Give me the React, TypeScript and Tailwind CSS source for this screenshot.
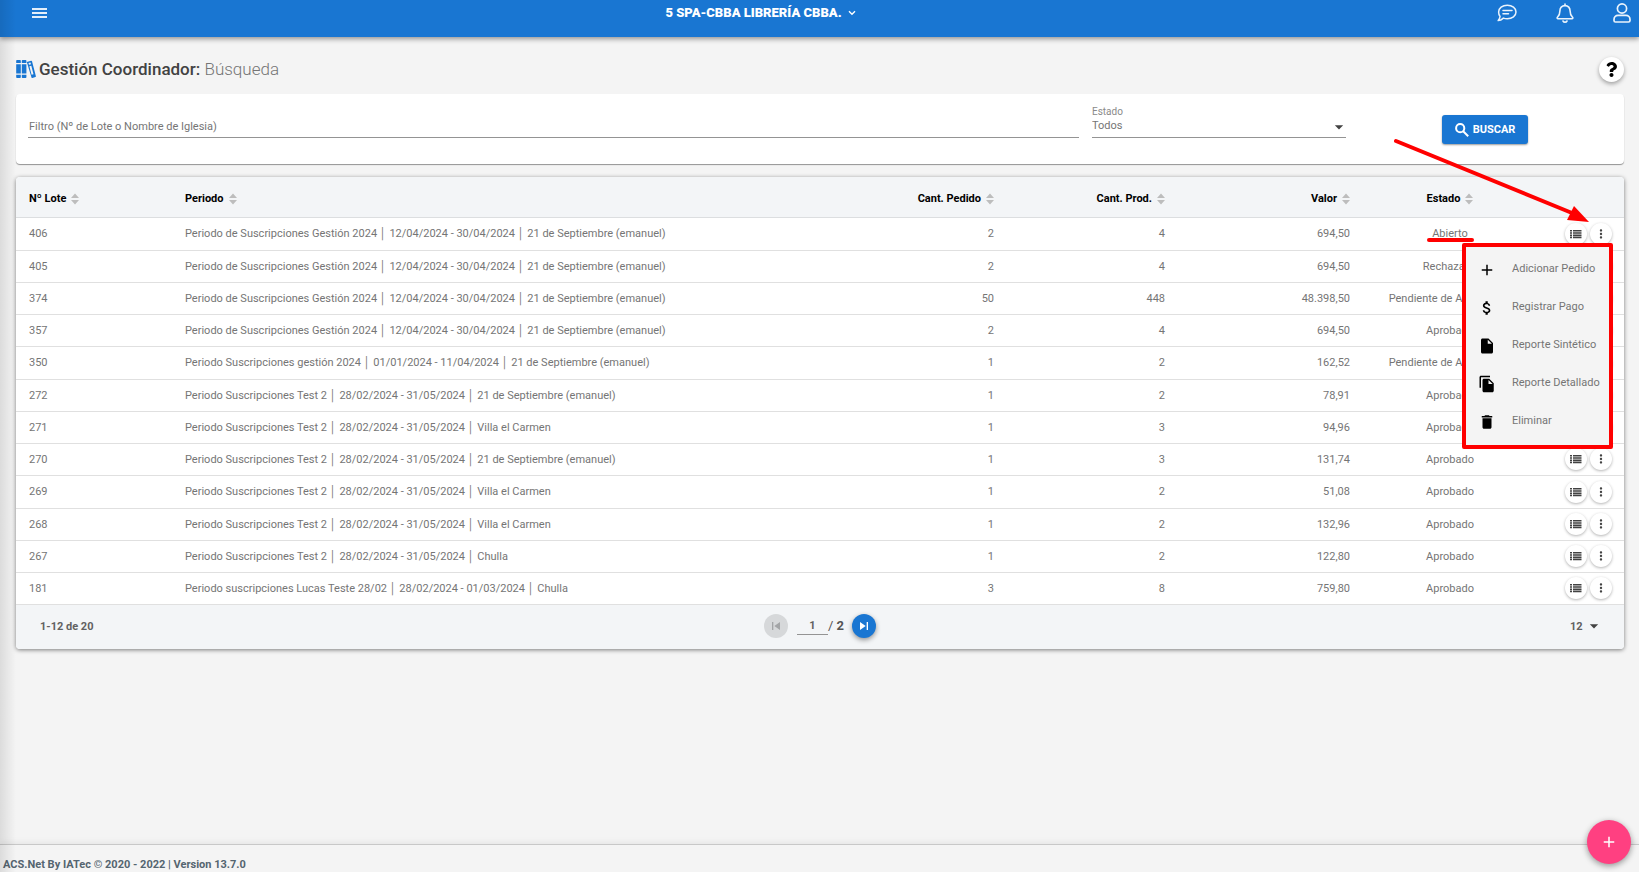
import { useState } from 'react'
import {
  MdAdd,
  MdArrowDropDown,
  MdAttachMoney,
  MdDelete,
  MdFileCopy,
  MdInsertDriveFile,
  MdMoreVert,
  MdSkipNext,
  MdSkipPrevious,
} from 'react-icons/md'
import { FaQuestion } from 'react-icons/fa'

interface Lote {
  id: number
  periodo: string
  fechas: string
  iglesia: string
  pedidos: number
  productos: number
  valor: string
  estado: string
}

const GESTION = 'Periodo de Suscripciones Gestión 2024'
const TEST = 'Periodo Suscripciones Test 2'

const lotes: Lote[] = [
  { id: 406, periodo: GESTION, fechas: '12/04/2024 - 30/04/2024', iglesia: '21 de Septiembre (emanuel)', pedidos: 2, productos: 4, valor: '694,50', estado: 'Abierto' },
  { id: 405, periodo: GESTION, fechas: '12/04/2024 - 30/04/2024', iglesia: '21 de Septiembre (emanuel)', pedidos: 2, productos: 4, valor: '694,50', estado: 'Rechazado' },
  { id: 374, periodo: GESTION, fechas: '12/04/2024 - 30/04/2024', iglesia: '21 de Septiembre (emanuel)', pedidos: 50, productos: 448, valor: '48.398,50', estado: 'Pendiente de Aprobación' },
  { id: 357, periodo: GESTION, fechas: '12/04/2024 - 30/04/2024', iglesia: '21 de Septiembre (emanuel)', pedidos: 2, productos: 4, valor: '694,50', estado: 'Aprobado' },
  { id: 350, periodo: 'Periodo Suscripciones gestión 2024', fechas: '01/01/2024 - 11/04/2024', iglesia: '21 de Septiembre (emanuel)', pedidos: 1, productos: 2, valor: '162,52', estado: 'Pendiente de Aprobación' },
  { id: 272, periodo: TEST, fechas: '28/02/2024 - 31/05/2024', iglesia: '21 de Septiembre (emanuel)', pedidos: 1, productos: 2, valor: '78,91', estado: 'Aprobado' },
  { id: 271, periodo: TEST, fechas: '28/02/2024 - 31/05/2024', iglesia: 'Villa el Carmen', pedidos: 1, productos: 3, valor: '94,96', estado: 'Aprobado' },
  { id: 270, periodo: TEST, fechas: '28/02/2024 - 31/05/2024', iglesia: '21 de Septiembre (emanuel)', pedidos: 1, productos: 3, valor: '131,74', estado: 'Aprobado' },
  { id: 269, periodo: TEST, fechas: '28/02/2024 - 31/05/2024', iglesia: 'Villa el Carmen', pedidos: 1, productos: 2, valor: '51,08', estado: 'Aprobado' },
  { id: 268, periodo: TEST, fechas: '28/02/2024 - 31/05/2024', iglesia: 'Villa el Carmen', pedidos: 1, productos: 2, valor: '132,96', estado: 'Aprobado' },
  { id: 267, periodo: TEST, fechas: '28/02/2024 - 31/05/2024', iglesia: 'Chulla', pedidos: 1, productos: 2, valor: '122,80', estado: 'Aprobado' },
  { id: 181, periodo: 'Periodo suscripciones Lucas Teste 28/02', fechas: '28/02/2024 - 01/03/2024', iglesia: 'Chulla', pedidos: 3, productos: 8, valor: '759,80', estado: 'Aprobado' },
]

const columns = [
  { label: 'Nº Lote', align: 'text-left', width: 'w-[156px]' },
  { label: 'Periodo', align: 'text-left', width: '' },
  { label: 'Cant. Pedido', align: 'text-right', width: 'w-[171px]' },
  { label: 'Cant. Prod.', align: 'text-right', width: 'w-[171px]' },
  { label: 'Valor', align: 'text-right', width: 'w-[185px]' },
  { label: 'Estado', align: 'text-center', width: 'w-[174px]' },
]

const menuItems = [
  { label: 'Adicionar Pedido', icon: MdAdd },
  { label: 'Registrar Pago', icon: MdAttachMoney },
  { label: 'Reporte Sintético', icon: MdInsertDriveFile },
  { label: 'Reporte Detallado', icon: MdFileCopy },
  { label: 'Eliminar', icon: MdDelete },
]

function SortIcon() {
  return (
    <svg viewBox="0 0 8 12" className="h-3 w-2 fill-[#bdbdbd]" aria-hidden="true">
      <path d="M4 0.5 8 5H0zM4 11.5 0 7h8z" />
    </svg>
  )
}

function ListIcon() {
  return (
    <svg viewBox="0 0 12 10" className="h-[10px] w-3 fill-[#424242]" aria-hidden="true">
      <path d="M0 1h2v1.6H0zM3 1h8.5v1.6H3zM0 3.2h2v1.6H0zM3 3.2h8.5v1.6H3zM0 5.4h2V7H0zM3 5.4h8.5V7H3zM0 7.6h2v1.6H0zM3 7.6h8.5v1.6H3z" />
    </svg>
  )
}

function SearchIcon() {
  return (
    <svg viewBox="0 0 14 14" className="h-[14px] w-[14px] fill-none stroke-white stroke-2" aria-hidden="true">
      <circle cx="5.200" cy="5.200" r="4.100" />
      <path d="M8.200 8.200 13.200 13.200" />
    </svg>
  )
}

function BooksIcon() {
  return (
    <svg viewBox="0 0 20 18" className="h-[18px] w-5 fill-[#1976d2]" aria-hidden="true">
      <path d="M1 0h3a.8.8 0 0 1 .8.8V3H.2V.8A.8.8 0 0 1 1 0zM.2 4.200h4.600v9.400H.2zM.2 14.800h4.600v2.400a.8.8 0 0 1-.8.8H1a.8.8 0 0 1-.8-.8z" />
      <path d="M6.600 0h3a.8.8 0 0 1 .8.8V3H5.800V.8a.8.8 0 0 1 .8-.8zM5.800 4.200h4.600v9.400H5.800zM5.800 14.800h4.600v2.400a.8.8 0 0 1-.8.8h-3a.8.8 0 0 1-.8-.8z" />
      <path
        fillRule="evenodd"
        d="M10.800 1.900 15.100.8c.4-.1.800.1.900.5l3.900 14.900c.1.400-.1.800-.5.900l-3 .8c-.4.100-.8-.1-.9-.5zM12.500 3l.5 1.800 2-.5-.5-1.800zM13.400 6.300l2.200 8.400 1.900-.5L15.300 5.800z"
      />
    </svg>
  )
}

function Header() {
  return (
    <header className="relative z-20 flex h-[37px] items-start bg-[#1976d2] pr-2 pl-8 text-white shadow-[0_2px_5px_rgba(0,0,0,0.4)]">
      <button aria-label="Menú" className="flex h-[26px] items-center">
        <svg viewBox="0 0 16 12" className="h-3 w-4 fill-[#e3effb]">
          <path d="M0 1h15v2H0zM0 5h15v2H0zM0 9h15v2H0z" />
        </svg>
      </button>
      <div className="flex flex-1 justify-center pr-6">
        <button className="flex h-[26px] items-center gap-[6px] text-[13px] font-black">
          5 SPA-CBBA LIBRERÍA CBBA.
          <svg viewBox="0 0 8 6" className="h-[6px] w-2 fill-none stroke-white stroke-[1.4]">
            <path d="M1 1.2 4 4.2 7 1.2" />
          </svg>
        </button>
      </div>
      <div className="flex h-[26px] items-center gap-[39px]">
        <button aria-label="Mensajes">
          <svg viewBox="0 0 20 18" className="h-[18px] w-5 fill-none stroke-[#eaf3fc] stroke-[1.5]" strokeLinejoin="round" strokeLinecap="round">
            <path d="M10.3 1.2c4.9 0 8.7 3 8.7 6.8s-3.8 6.8-8.7 6.8c-1.4 0-2.7-.2-3.9-.7C5.1 15.300 3.400 16.500 1.200 16.600c1-1.200 1.700-2.700 1.900-4.200C2.100 11.200 1.600 9.700 1.600 8c0-3.800 3.800-6.800 8.700-6.800z" />
            <path d="M6 6.500h9M6 9.700h5.500" />
          </svg>
        </button>
        <button aria-label="Notificaciones">
          <svg viewBox="0 0 18 20" className="h-5 w-[18px] fill-none stroke-[#eaf3fc] stroke-[1.6]" strokeLinejoin="round" strokeLinecap="round">
            <path d="M9 1v1.600C5.800 2.600 3.900 5 3.900 7.900c0 4.100-1.300 5.100-2.500 6.300-.6.700-.2 1.500.6 1.500h14c.8 0 1.200-.8.6-1.500-1.200-1.200-2.500-2.200-2.500-6.300C14.100 5 12.200 2.600 9 2.600" />
            <path d="M7 18c.5.900 1.200 1.200 2 1.200s1.500-.3 2-1.200" />
          </svg>
        </button>
        <button aria-label="Perfil">
          <svg viewBox="0 0 18 20" className="h-5 w-[18px] fill-none stroke-[#eaf3fc] stroke-[1.7]">
            <circle cx="9" cy="5.500" r="4.600" />
            <path d="M5 12.300h8c2.300 0 4 1.800 4 4.100v1.100c0 .9-.7 1.500-1.500 1.500h-13c-.8 0-1.500-.6-1.500-1.500v-1.100c0-2.300 1.700-4.100 4-4.100z" />
          </svg>
        </button>
      </div>
    </header>
  )
}

function Filters() {
  const [filtro, setFiltro] = useState('')

  return (
    <form
      onSubmit={(e) => e.preventDefault()}
      className="flex h-[70px] items-start rounded bg-white px-3 shadow-[0_1px_1px_rgba(0,0,0,0.4)]"
    >
      <input
        type="text"
        aria-label="Filtro (Nº de Lote o Nombre de Iglesia)"
        placeholder="Filtro (Nº de Lote o Nombre de Iglesia)"
        value={filtro}
        onChange={(e) => setFiltro(e.target.value)}
        className="mt-5 h-6 min-w-0 flex-1 border-b border-[#949494] pt-[2px] pl-px text-[11px] outline-none placeholder:text-[#757575]"
      />
      <div className="relative mt-[10px] ml-[13px] w-[254px] border-b border-[#949494]">
        <label htmlFor="estado" className="block h-[14px] text-[10px] leading-4 text-[#8a8a8a]">Estado</label>
        <select id="estado" className="block h-[19px] w-full appearance-none pb-[3px] text-[11px] leading-4 text-[#757575] outline-none">
          <option>Todos</option>
        </select>
        <MdArrowDropDown className="pointer-events-none absolute -right-[3px] bottom-0 h-5 w-5 text-[#424242]" />
      </div>
      <div className="w-[266px] pl-24">
        <button className="mt-[21px] flex h-[29px] w-[86px] items-center justify-center gap-1 rounded-[3px] bg-[#1976d2] text-[11px] font-bold text-white shadow-[0_1px_2px_rgba(0,0,0,0.4)]">
          <SearchIcon />
          <span className="pt-px">BUSCAR</span>
        </button>
      </div>
    </form>
  )
}

function ActionMenu() {
  return (
    <>
      <ul className="absolute top-5 right-0 z-10 w-[151px] rounded-[2px] border-4 border-[#ff0000] bg-[#f4f4f4] py-1">
        {menuItems.map(({ label, icon: Icon }) => (
          <li key={label}>
            <button className="flex h-[38px] w-full items-center gap-4 pl-3 text-[11px] whitespace-nowrap text-[#757575]">
              <Icon className="h-[18px] w-[18px] shrink-0 text-black" />
              {label}
            </button>
          </li>
        ))}
      </ul>
      {/* Arrow pointing at the options button */}
      <svg viewBox="0 0 200 90" className="pointer-events-none absolute right-[23px] bottom-[22px] z-10 h-[90px] w-[200px] fill-[#ff0000]">
        <path d="M6 8 182 80" className="stroke-[#ff0000] stroke-[4]" strokeLinecap="round" />
        <path d="M184 73 199 89 177 87z" />
      </svg>
    </>
  )
}

function LotesTable() {
  const roundButton = 'flex h-[22px] w-[22px] items-center justify-center rounded-full bg-white shadow-[0_1px_3px_rgba(0,0,0,0.3)]'
  const cell = 'px-[13px] pt-[2px]'

  return (
    <section className="mt-[13px] rounded bg-white shadow-[0_1px_4px_rgba(0,0,0,0.5)]">
      <table className="w-full table-fixed border-collapse text-[11px] text-[#757575]">
        <thead>
          <tr className="h-10 border-b border-[#dcdee0] bg-[#f3f5f7] text-black">
            {columns.map((col) => (
              <th key={col.label} className={`px-[13px] font-bold first:rounded-tl ${col.align} ${col.width}`}>
                <button className="inline-flex items-center gap-[5px] pt-[5px] align-middle">
                  {col.label}
                  <SortIcon />
                </button>
              </th>
            ))}
            <th className="w-[87px] rounded-tr" aria-label="Acciones" />
          </tr>
        </thead>
        <tbody>
          {lotes.map((lote, index) => (
            <tr key={lote.id} className="h-8 border-b border-[#e0e0e0] nth-[4n+1]:h-[33px]">
              <td className={cell}>{lote.id}</td>
              <td className={`${cell} whitespace-nowrap`}>
                {lote.periodo} │ {lote.fechas} │ {lote.iglesia}
              </td>
              <td className={`${cell} text-right`}>{lote.pedidos}</td>
              <td className={`${cell} text-right`}>{lote.productos}</td>
              <td className={`${cell} text-right`}>{lote.valor}</td>
              <td className="pt-[2px] text-center whitespace-nowrap">
                <span className="relative">
                  {lote.estado}
                  {index === 0 && (
                    <span className="absolute -right-[6px] -bottom-[2px] -left-[5px] h-1 rounded-full bg-[#ff0000]" />
                  )}
                </span>
              </td>
              <td>
                <div className="relative flex justify-end gap-[3px] pr-3">
                  <button aria-label={`Detalle del lote ${lote.id}`} className={roundButton}>
                    <ListIcon />
                  </button>
                  <button aria-label={`Opciones del lote ${lote.id}`} className={roundButton}>
                    <MdMoreVert className="h-[14px] w-[14px] text-[#424242]" />
                  </button>
                  {index === 0 && (
                    <div className="absolute inset-y-0 right-[11px] w-0">
                      <ActionMenu />
                    </div>
                  )}
                </div>
              </td>
            </tr>
          ))}
        </tbody>
      </table>
      <Pagination />
    </section>
  )
}

function Pagination() {
  const [page, setPage] = useState('1')

  return (
    <div className="flex h-11 items-center rounded-b bg-[#f3f5f7] px-6 pb-[2px] text-[11px] font-bold text-[#616161]">
      <div className="flex-1 pt-[3px]">1-12 de 20</div>
      <div className="flex items-center">
        <button aria-label="Página anterior" disabled className="flex h-6 w-6 items-center justify-center rounded-full bg-[#d6d8da] text-[#a3a5a7]">
          <MdSkipPrevious className="h-4 w-4" />
        </button>
        <input
          aria-label="Página"
          value={page}
          onChange={(e) => setPage(e.target.value)}
          className="ml-[9px] h-[18px] w-[31px] border-b border-[#949494] text-center text-[11px] font-bold outline-none"
        />
        <span className="text-[13px] text-[#545454]"><span className="font-normal">/</span> 2</span>
        <button
          aria-label="Página siguiente"
          className="ml-2 flex h-6 w-6 items-center justify-center rounded-full bg-[#1976d2] text-white shadow-[0_2px_5px_rgba(0,0,0,0.4)]"
        >
          <MdSkipNext className="h-4 w-4" />
        </button>
      </div>
      <div className="flex flex-1 justify-end pt-[3px]">
        <div className="relative">
          <select aria-label="Filas por página" className="w-[30px] appearance-none text-[11px] font-bold outline-none">
            <option>12</option>
          </select>
          <MdArrowDropDown className="pointer-events-none absolute -top-[3px] -right-1 h-5 w-5 text-[#424242]" />
        </div>
      </div>
    </div>
  )
}

export default function App() {
  return (
    <div className="relative flex h-screen flex-col overflow-hidden bg-[#f4f4f4] font-[Roboto,sans-serif] text-[#757575]">
      <Header />
      <main className="flex-1 pr-[15px] pl-4">
        <div className="flex h-[57px] items-center justify-between pt-[7px]">
          <h1 className="flex items-center gap-[3px] text-[17px] text-[#757575]">
            <BooksIcon />
            <span className="pt-[2px]">
              <span className="font-medium text-[#424242]">Gestión Coordinador:</span>{' '}
              <span className="font-light">Búsqueda</span>
            </span>
          </h1>
          <button aria-label="Ayuda" className="flex h-[25px] w-[25px] items-center justify-center rounded-full bg-white shadow-[0_2px_4px_rgba(0,0,0,0.35)]">
            <FaQuestion className="h-[15px] w-[15px] text-black" />
          </button>
        </div>
        <Filters />
        <LotesTable />
      </main>
      <footer className="h-7 border-t border-[#c8c8c8] pt-3 pl-[3px] text-[11px] leading-4 font-bold text-[#546570] shadow-[0_-2px_6px_rgba(0,0,0,0.06)]">
        ACS.Net By IATec © 2020 - 2022 | Version 13.7.0
      </footer>
      {/* Shade cast by the collapsed side drawer */}
      <div className="pointer-events-none absolute inset-y-0 left-0 z-20 w-4 bg-linear-to-r from-black/10 to-transparent" />
      <button
        aria-label="Adicionar"
        className="absolute right-2 bottom-2 z-20 flex h-11 w-11 items-center justify-center rounded-full bg-[#ff4081] text-white shadow-[0_2px_6px_rgba(0,0,0,0.4)]"
      >
        <MdAdd className="h-[18px] w-[18px]" />
      </button>
    </div>
  )
}
